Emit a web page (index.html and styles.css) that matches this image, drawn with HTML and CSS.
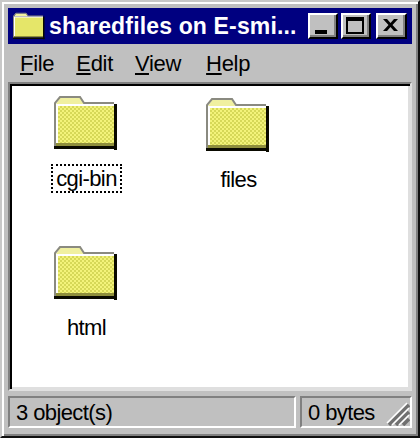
FILE: index.html
```html
<!DOCTYPE html>
<html lang="en">
<head>
<meta charset="utf-8">
<title>sharedfiles on E-smi...</title>
<link rel="stylesheet" href="styles.css">
</head>
<body>
<svg class="defs" width="0" height="0" aria-hidden="true">
  <defs>
    <pattern id="dither" width="4" height="4" patternUnits="userSpaceOnUse">
      <rect width="4" height="4" fill="#f3f37a"/>
      <rect width="2" height="2" fill="#d6d858"/>
      <rect x="2" y="2" width="2" height="2" fill="#d6d858"/>
    </pattern>
    <symbol id="folder" viewBox="0 0 64 54">
      <path d="M2 8 L6 2 H26 L30 8 Z" fill="#f0f0a0"/>
      <path d="M1 9 V7 L6 1 H26 L30 7 H60" fill="none" stroke="#8a8a80" stroke-width="2"/>
      <rect x="2" y="8" width="58" height="41" fill="#fff"/>
      <rect x="4" y="10" width="56" height="39" fill="url(#dither)"/>
      <rect x="0" y="8" width="2" height="43" fill="#8a8a80"/>
      <rect x="2" y="47" width="58" height="3" fill="#8f8f3c"/>
      <rect x="60" y="8" width="3" height="46" fill="#0a0a00"/>
      <rect x="0" y="50" width="63" height="3" fill="#0a0a00"/>
    </symbol>
  </defs>
</svg>
<main class="window">
  <header class="titlebar">
    <svg class="title-icon" viewBox="0 0 64 54" width="32" height="28"><use href="#folder"/></svg>
    <h1 class="title">sharedfiles on E-smi...</h1>
    <div class="controls">
      <button class="ctl ctl-min" aria-label="Minimize"><span class="min-glyph"></span></button>
      <button class="ctl ctl-max" aria-label="Maximize"><span class="max-glyph"></span></button>
      <button class="ctl ctl-close" aria-label="Close">
        <svg viewBox="0 0 15 12" width="15" height="12"><path d="M0 0 H4 L7.5 4 L11 0 H15 L9.5 6 L15 12 H11 L7.5 8 L4 12 H0 L5.5 6 Z" fill="#000"/></svg>
      </button>
    </div>
  </header>
  <nav class="menubar">
    <span class="menu"><u>F</u>ile</span>
    <span class="menu"><u>E</u>dit</span>
    <span class="menu"><u>V</u>iew</span>
    <span class="menu menu-help"><u>H</u>elp</span>
  </nav>
  <section class="content">
    <div class="item">
      <svg class="folder" viewBox="0 0 64 54" width="64" height="54"><use href="#folder"/></svg>
      <span class="label focused">cgi-bin</span>
    </div>
    <div class="item item-low">
      <svg class="folder" viewBox="0 0 64 54" width="64" height="54"><use href="#folder"/></svg>
      <span class="label">files</span>
    </div>
    <div class="item">
      <svg class="folder" viewBox="0 0 64 54" width="64" height="54"><use href="#folder"/></svg>
      <span class="label">html</span>
    </div>
  </section>
  <footer class="statusbar">
    <div class="pane pane-objects">3 object(s)</div>
    <div class="pane pane-size">0 bytes
      <svg class="grip" viewBox="0 0 24 24" width="24" height="24">
        <path d="M23 3 L3 23 M23 10 L10 23 M23 17 L17 23" stroke="#707070" stroke-width="3.5" fill="none"/>
        <path d="M21 1 L1 21 M23 6 L6 23 M23 13 L13 23" stroke="#fff" stroke-width="1.5" fill="none"/>
      </svg>
    </div>
  </footer>
</main>
</body>
</html>
```
FILE: styles.css
```css
* { box-sizing: border-box; }
html, body { margin: 0; padding: 0; }
body { width: 420px; height: 438px; overflow: hidden; background: #c0c0c0; font-family: "Liberation Sans", Arial, sans-serif; color: #000; }
.defs { position: absolute; }
.window {
  width: 420px; height: 438px;
  display: flex; flex-direction: column;
  background: #c0c0c0;
  border: 2px solid; border-color: #c8c8c8 #101010 #101010 #c8c8c8;
  box-shadow: inset 2px 2px 0 #fff, inset -2px -2px 0 #808080;
  padding: 6px 6px 8px;
}
.titlebar {
  height: 36px; flex: none; background: #000080; color: #fff;
  display: flex; align-items: center; padding: 0 5px 0 5px;
}
.title-icon { flex: none; margin-right: 4px; }
.title {
  margin: 0; flex: 1; font-size: 23px; font-weight: 700; letter-spacing: 0.15px;
  white-space: nowrap; overflow: hidden; line-height: 36px;
}
.controls { display: flex; flex: none; gap: 3px; }
.ctl {
  width: 30px; height: 26px; padding: 0; background: #c0c0c0;
  border: 2px solid; border-color: #fff #000 #000 #fff;
  box-shadow: inset -2px -2px 0 #808080;
  display: flex; align-items: center; justify-content: center;
}
.ctl-close { width: 31px; margin-left: 2px; }
.min-glyph { width: 12px; height: 4px; background: #000; align-self: flex-end; margin: 0 4px 3px 0; }
.max-glyph { width: 18px; height: 17px; border: 2px solid #000; border-top-width: 4px; margin: 0 2px 2px 0; }
.ctl-close svg { margin: 0 2px 2px 0; }
.menubar {
  height: 38px; flex: none; display: flex; align-items: center;
  font-size: 22px; letter-spacing: -0.3px; padding: 2px 0 0 12px; gap: 22px;
}
.menu-help { margin-left: 3px; }
.content {
  flex: 1; min-height: 0; background: #fff;
  border: 2px solid; border-color: #808080 #dfdfdf #dfdfdf #808080;
  box-shadow: inset 2px 2px 0 #000, inset -2px -2px 0 #dfdfdf;
  display: grid; grid-template-columns: 152px 152px; grid-auto-rows: 150px;
  padding: 12px 0 0 0; align-content: start; justify-content: start;
}
.item { display: flex; flex-direction: column; align-items: center; }
.item-low { padding-top: 2px; }
.folder { flex: none; display: block; }
.label { font-size: 22px; letter-spacing: -0.6px; line-height: 28px; margin: 14px 0 0 1px; padding: 0 3px; }
.focused { border: 2px dotted #000; line-height: 25px; }
.statusbar { height: 32px; flex: none; display: flex; gap: 4px; margin-top: 5px; font-size: 22px; letter-spacing: -0.6px; }
.pane {
  border: 2px solid; border-color: #808080 #fff #fff #808080;
  padding: 1px 0 0 6px; line-height: 27px; white-space: nowrap; position: relative;
}
.pane-objects { width: 288px; }
.pane-size { flex: 1; }
.grip { position: absolute; right: 0; bottom: 0; }
```
